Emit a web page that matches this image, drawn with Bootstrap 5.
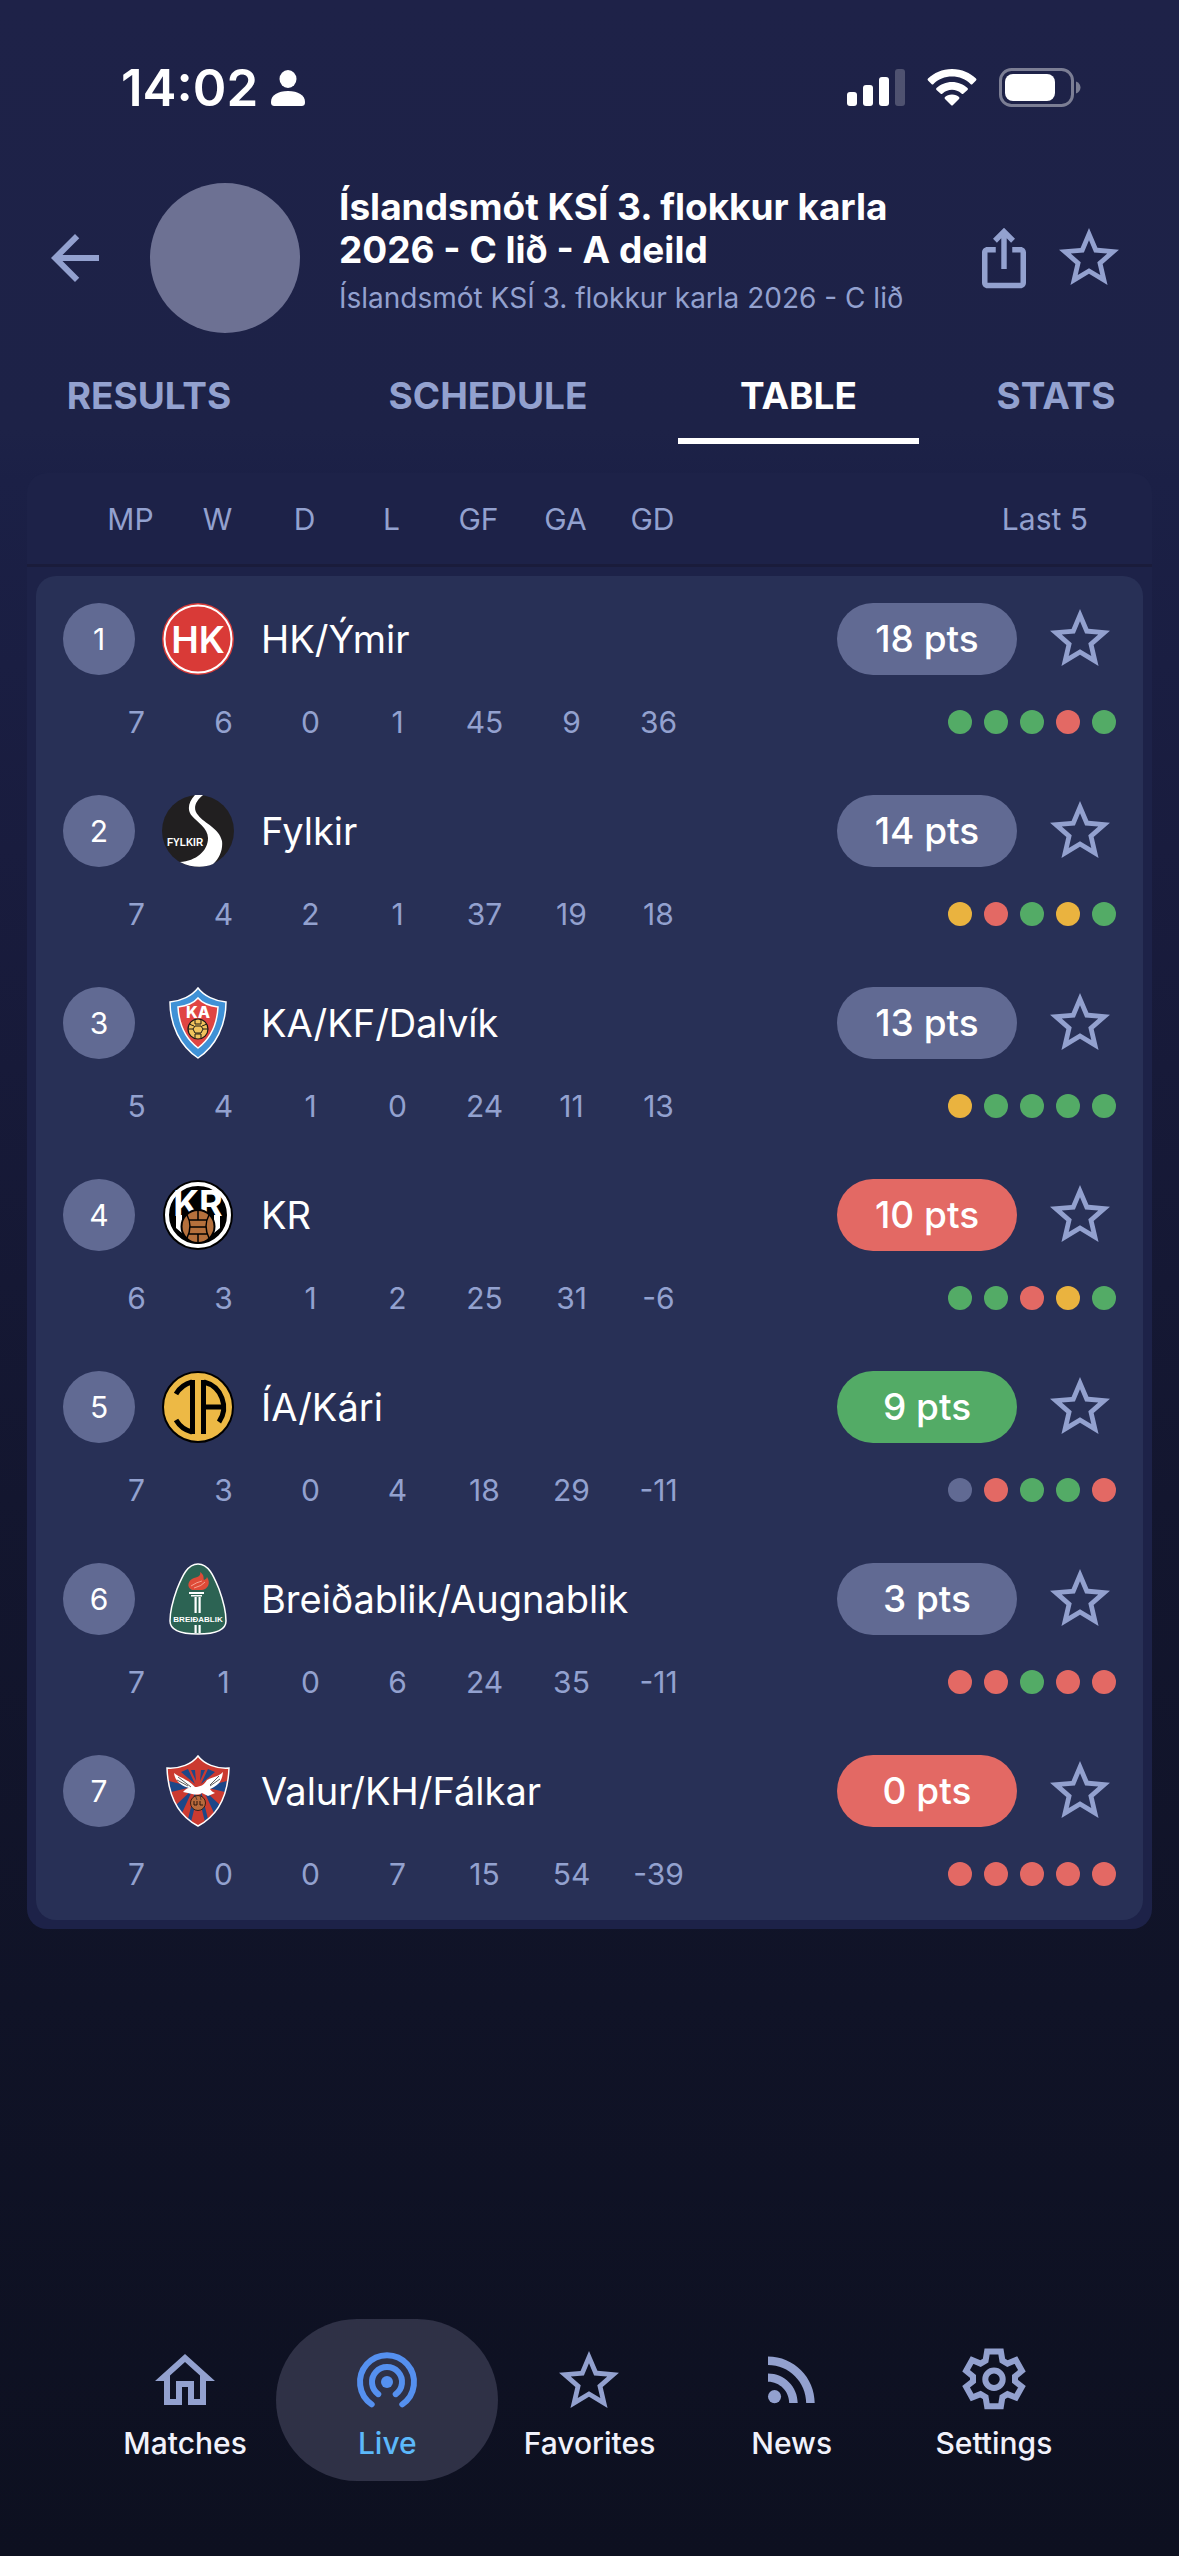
<!DOCTYPE html>
<html lang="is">
<head>
<meta charset="utf-8">
<meta name="viewport" content="width=device-width, initial-scale=1">
<title>Íslandsmót KSÍ 3. flokkur karla 2026 - C lið - A deild</title>
<link rel="stylesheet" href="https://cdn.jsdelivr.net/npm/bootstrap@5.3.0/dist/css/bootstrap.min.css">
<script src="https://cdn.jsdelivr.net/npm/bootstrap@5.3.0/dist/js/bootstrap.bundle.min.js" defer></script>
<style>
  :root { --ink: #93a1cf; --panel: #1d2248; --rows: #283056; --chip: #616a93; --win: #53ab66; --loss: #e36964; --draw: #eab33f; }
  body { font-family: Inter, "Open Sans", sans-serif; color: #fff;
    background: #0e1122 linear-gradient(180deg, #1e2248 0, #1d2247 430px, #1b2046 480px, #191c3e 850px, #13162f 1500px, #101327 2000px, #0d1020 2556px) no-repeat; }
  svg { display: block; flex: none; }
  .glyph { width: 72px; height: 72px; fill: currentColor; }
  .bare { border: 0; background: none; padding: 0; color: var(--ink); }
  .status-bar { padding: 66px 98px 0 121px; height: 183px; }
  .clock { font-size: 51px; line-height: 44px; font-weight: 600; }
  .person { margin-left: 13px; }
  .signals { gap: 22px; }
  .league-head { padding: 0 54px 0 39px; }
  .avatar-disc { width: 150px; height: 150px; background: #6d7193; margin: 0 39px; flex: none; }
  .league-text { padding-bottom: 16px; }
  .league-title { font-size: 37px; line-height: 43px; font-weight: 700; }
  .league-sub { font-size: 28px; line-height: 34px; margin-top: 10px; color: var(--ink); }
  .head-actions { gap: 16px; }
  .tab-strip { display: grid; grid-template-columns: 298fr 340fr 241fr 234fr; column-gap: 20px; padding: 42px 6px 29px 0; }
  .tab-strip a { font-size: 37px; line-height: 42px; font-weight: 700; padding-bottom: 21px; border-bottom: 6px solid transparent; color: var(--ink); text-align: center; text-decoration: none; }
  .tab-strip a.active { color: #fff; border-color: #fff; }
  .standings { margin: 0 27px; padding-bottom: 9px; background: var(--panel); border-radius: 20px; font-size: 30px; line-height: 36px; color: var(--ink); }
  .standings table, .standings thead, .standings tbody { display: block; }
  .standings th, .standings td { padding: 0; font-weight: 400; }
  .standings thead tr { display: flex; padding: 28px 64px 27px 60px; border-bottom: 3px solid #1a1c3b; }
  .stat { width: 87px; text-align: center; }
  .standings tbody { margin: 9px 9px 0; background: var(--rows); border-radius: 20px; }
  .standings tbody tr { display: flex; flex-wrap: wrap; row-gap: 29px; padding: 27px 27px 28px; }
  .team-cell { width: 100%; display: flex; align-items: center; color: #fff; }
  .team-cell + .stat { margin-left: 30px; }
  .place { width: 72px; height: 72px; border-radius: 50%; background: var(--chip); line-height: 72px; text-align: center; }
  .crest { width: 72px; height: 72px; margin: 0 27px; }
  .team-name { font-size: 38px; line-height: 44px; color: #fff; text-decoration: none; }
  .points { width: 180px; border-radius: 36px; background: var(--chip); font-size: 37px; line-height: 72px; text-align: center; margin: 0 27px 0 auto; font-weight: 500; }
  .points.up { background: var(--win); }
  .points.down { background: var(--loss); }
  .form-cell { display: flex; align-items: center; gap: 12px; margin-left: auto; }
  .form-cell i { width: 24px; height: 24px; border-radius: 50%; background: var(--chip); }
  .form-cell .w { background: var(--win); }
  .form-cell .l { background: var(--loss); }
  .form-cell .d { background: var(--draw); }
  .app-nav { display: grid; grid-template-columns: repeat(5, 1fr); padding: 0 84px 75px; }
  .app-nav a { display: flex; flex-direction: column; align-items: center; gap: 8px; padding: 26px 0 20px; margin: 0 -10px; border-radius: 81px; color: #f1f2fb; font-size: 30px; line-height: 36px; font-weight: 500; text-decoration: none; }
  .app-nav svg { color: var(--ink); }
  .app-nav a.active { background: #2f3146; color: #5cb8fa; }
  .app-nav a.active svg { color: #5590ef; }
</style>
</head>
<body>
<svg width="0" height="0" class="position-absolute" aria-hidden="true">
  <symbol id="star" viewBox="0 0 24 24"><path d="M22 9.24l-7.19-.62L12 2 9.19 8.63 2 9.24l5.46 4.73L5.82 21 12 17.27 18.18 21l-1.63-7.03L22 9.24zM12 15.4l-3.76 2.27 1-4.28-3.32-2.88 4.38-.38L12 6.1l1.71 4.04 4.38.38-3.32 2.88 1 4.28L12 15.4z"/></symbol>
</svg>
<div class="d-flex flex-column min-vh-100">

  <div class="status-bar d-flex align-items-start justify-content-between">
    <div class="d-flex align-items-center">
      <span class="clock">14:02</span>
      <svg class="person" width="34" height="44" viewBox="0 0 34 44" fill="#fff"><ellipse cx="17" cy="13" rx="8.5" ry="9"/><path d="M0 36C0 29 7 25 17 25s17 4 17 11c0 3-1 4-4 4H4c-3 0-4-1-4-4z"/></svg>
    </div>
    <div class="signals d-flex align-items-center">
      <svg width="58" height="44" viewBox="0 0 58 44" fill="#fff"><rect y="26" width="10" height="14" rx="3"/><rect x="16" y="19" width="10" height="21" rx="3"/><rect x="32" y="11" width="10" height="29" rx="3"/><rect x="48" y="3" width="10" height="37" rx="3" opacity=".22"/></svg>
      <svg width="50" height="44" viewBox="0 0 50 44" fill="#fff"><path d="M25 3C15 3 7 7 1 12.500q-1 1 0 2L4.500 18q1 1 2 0C11 13 18 10.500 25 10.500S39 13 43.500 18q1 1 2 0L49 14.500q1-1 0-2C43 7 35 3 25 3z"/><path d="M25 16c-6 0-11.500 2.500-15.500 6q-1 1 0 2l4 3.500q1 1 2 0c3-2.500 6-3.700 9.500-3.700s6.500 1.200 9.500 3.700q1 1 2 0l4-3.500q1-1 0-2C36.500 18.500 31 16 25 16z"/><path d="M25 28.500c-3 0-5.500 1-7 2.500q-1 1 0 2l6 6q1 1 2 0l6-6q1-1 0-2c-1.500-1.500-4-2.500-7-2.500z"/></svg>
      <svg width="82" height="44" viewBox="0 0 82 44"><rect x="1.500" y="3.500" width="72" height="36" rx="11" fill="none" stroke="#fff" stroke-opacity=".42" stroke-width="3"/><rect x="6" y="8" width="50" height="27" rx="8" fill="#fff"/><path d="M77 15.500c3 1 4.500 3.500 4.500 6s-1.500 5-4.500 6z" fill="#fff" opacity=".42"/></svg>
    </div>
  </div>

  <header class="league-head d-flex align-items-center">
    <button type="button" class="bare" aria-label="Back"><svg class="glyph" viewBox="0 0 24 24"><path d="M20 11H7.830l5.590-5.590L12 4l-8 8 8 8 1.410-1.410L7.830 13H20v-2z"/></svg></button>
    <div class="avatar-disc rounded-circle"></div>
    <div class="league-text flex-grow-1">
      <h1 class="league-title mb-0">Íslandsmót KSÍ 3. flokkur karla 2026 - C lið - A deild</h1>
      <div class="league-sub text-nowrap">Íslandsmót KSÍ 3. flokkur karla 2026 - C lið</div>
    </div>
    <div class="head-actions d-flex align-items-center">
      <button type="button" class="bare" aria-label="Share"><svg width="66" height="66" viewBox="0 0 24 24" fill="currentColor"><path d="m16 5-1.420 1.420-1.590-1.590V16h-1.980V4.830L9.420 6.420 8 5l4-4 4 4zm4 5v11c0 1.100-.9 2-2 2H6c-1.110 0-2-.9-2-2V10c0-1.110.89-2 2-2h3v2H6v11h12V10h-3V8h3c1.100 0 2 .89 2 2z"/></svg></button>
      <button type="button" class="bare" aria-label="Follow"><svg class="glyph"><use href="#star"/></svg></button>
    </div>
  </header>

  <nav class="tab-strip">
    <a href="#results">RESULTS</a>
    <a href="#schedule">SCHEDULE</a>
    <a href="#table" class="active" aria-current="page">TABLE</a>
    <a href="#stats">STATS</a>
  </nav>

  <main class="standings" id="table">
    <table>
      <thead>
        <tr><th class="stat">MP</th><th class="stat">W</th><th class="stat">D</th><th class="stat">L</th><th class="stat">GF</th><th class="stat">GA</th><th class="stat">GD</th><th class="ms-auto">Last 5</th></tr>
      </thead>
      <tbody>
        <tr>
          <td class="team-cell"><span class="place">1</span>
            <svg class="crest" viewBox="0 0 72 72"><circle cx="36" cy="36" r="36" fill="#d93a37"/><circle cx="36" cy="36" r="33.500" fill="none" stroke="#fff" stroke-width="2"/><text x="36" y="50" text-anchor="middle" fill="#fff" font-family="Inter, sans-serif" font-size="37" font-weight="600">HK</text></svg>
            <a class="team-name" href="#hk">HK/Ýmir</a><span class="points">18 pts</span>
            <button type="button" class="bare" aria-label="Follow HK/Ýmir"><svg class="glyph"><use href="#star"/></svg></button></td>
          <td class="stat">7</td><td class="stat">6</td><td class="stat">0</td><td class="stat">1</td><td class="stat">45</td><td class="stat">9</td><td class="stat">36</td>
          <td class="form-cell"><i class="w"></i><i class="w"></i><i class="w"></i><i class="l"></i><i class="w"></i></td>
        </tr>
        <tr>
          <td class="team-cell"><span class="place">2</span>
            <svg class="crest" viewBox="0 0 72 72"><circle cx="36" cy="36" r="36" fill="#211f20"/><path d="M33 0C26 7 25 16 30 21C35 27 46 33 46 43C46 56 34 66 18 67C30 73 42 73 51 69C58 63 61 54 60 46C57 33 43 29 36 20C30 13 34 6 41 0z" fill="#fff"/><text x="5" y="51" fill="#fff" font-family="Liberation Sans, sans-serif" font-size="10" font-weight="700">FYLKIR</text></svg>
            <a class="team-name" href="#fylkir">Fylkir</a><span class="points">14 pts</span>
            <button type="button" class="bare" aria-label="Follow Fylkir"><svg class="glyph"><use href="#star"/></svg></button></td>
          <td class="stat">7</td><td class="stat">4</td><td class="stat">2</td><td class="stat">1</td><td class="stat">37</td><td class="stat">19</td><td class="stat">18</td>
          <td class="form-cell"><i class="d"></i><i class="l"></i><i class="w"></i><i class="d"></i><i class="w"></i></td>
        </tr>
        <tr>
          <td class="team-cell"><span class="place">3</span>
            <svg class="crest" viewBox="0 0 72 72"><path d="M36 1C42 9 53 14 64 15C64 38 54 59 36 71C18 59 8 38 8 15C19 14 30 9 36 1z" fill="#3f91d6" stroke="#fff" stroke-width="1.500"/><path d="M36 11C41 17 48 19 56 20C55 38 48 52 36 61C24 52 17 38 16 20C24 19 31 17 36 11z" fill="#e04543" stroke="#fff" stroke-width="1.500"/><text x="36" y="31" text-anchor="middle" fill="#fff" font-family="Inter, sans-serif" font-size="16" font-weight="800">KA</text><circle cx="36" cy="42" r="10" fill="#f0c35c" stroke="#1c1a16" stroke-width="1.200"/><path d="M26 42h5l2-3h6l2 3h5M31 42l2 4h6l2-4M33 33v4h6v-4M33 51v-4h6v4M27 37l5 2M45 37l-5 2" fill="none" stroke="#1c1a16" stroke-width="1"/></svg>
            <a class="team-name" href="#ka">KA/KF/Dalvík</a><span class="points">13 pts</span>
            <button type="button" class="bare" aria-label="Follow KA/KF/Dalvík"><svg class="glyph"><use href="#star"/></svg></button></td>
          <td class="stat">5</td><td class="stat">4</td><td class="stat">1</td><td class="stat">0</td><td class="stat">24</td><td class="stat">11</td><td class="stat">13</td>
          <td class="form-cell"><i class="d"></i><i class="w"></i><i class="w"></i><i class="w"></i><i class="w"></i></td>
        </tr>
        <tr>
          <td class="team-cell"><span class="place">4</span>
            <svg class="crest" viewBox="0 0 72 72"><circle cx="36" cy="36" r="35" fill="#000"/><circle cx="36" cy="36" r="31" fill="none" stroke="#fff" stroke-width="4"/><text x="36" y="37" text-anchor="middle" fill="#fff" font-family="Inter, sans-serif" font-size="36" font-weight="700">KR</text><path d="M14 36h6v18l-6-5zM52 36h6v13l-6 5z" fill="#fff"/><circle cx="36" cy="47.500" r="16.500" fill="#b5703c" stroke="#000" stroke-width="2"/><path d="M25 36Q31 47 25 59M47 36Q41 47 47 59M27 41h18M28 48h16M27 55h18M36 31v10M36 55v9" fill="none" stroke="#000" stroke-width="1.500"/></svg>
            <a class="team-name" href="#kr">KR</a><span class="points down">10 pts</span>
            <button type="button" class="bare" aria-label="Follow KR"><svg class="glyph"><use href="#star"/></svg></button></td>
          <td class="stat">6</td><td class="stat">3</td><td class="stat">1</td><td class="stat">2</td><td class="stat">25</td><td class="stat">31</td><td class="stat">-6</td>
          <td class="form-cell"><i class="w"></i><i class="w"></i><i class="l"></i><i class="d"></i><i class="w"></i></td>
        </tr>
        <tr>
          <td class="team-cell"><span class="place">5</span>
            <svg class="crest" viewBox="0 0 72 72"><circle cx="36" cy="36" r="35" fill="#edb945" stroke="#000" stroke-width="2"/><g fill="none" stroke="#000" stroke-width="5"><path d="M30.500 9v54M41.500 9v54M44 36h18"/><path d="M14 23A26 26 0 0 1 30 11M14 49A26 26 0 0 0 30 61M42 11A26 26 0 0 1 57 51"/></g></svg>
            <a class="team-name" href="#ia">ÍA/Kári</a><span class="points up">9 pts</span>
            <button type="button" class="bare" aria-label="Follow ÍA/Kári"><svg class="glyph"><use href="#star"/></svg></button></td>
          <td class="stat">7</td><td class="stat">3</td><td class="stat">0</td><td class="stat">4</td><td class="stat">18</td><td class="stat">29</td><td class="stat">-11</td>
          <td class="form-cell"><i></i><i class="l"></i><i class="w"></i><i class="w"></i><i class="l"></i></td>
        </tr>
        <tr>
          <td class="team-cell"><span class="place">6</span>
            <svg class="crest" viewBox="0 0 72 72"><path d="M36 1C47 1 52 14 57 26C61 37 64 47 64 58C64 68 52 71 36 71S8 68 8 58C8 47 11 37 15 26C20 14 25 1 36 1z" fill="#2c6353" stroke="#fff" stroke-width="1.500"/><path d="M27 29h15v2H27zM29 32h11v1.500H29zM32.500 34h2.200v16h-2.200zM36.500 34h2.200v16h-2.200zM32.500 62h2.200v8h-2.200zM36.500 62h2.200v8h-2.200z" fill="#fff"/><path d="M30 27C24 24 26 17 32 15C37 14 39 12 38 9C43 12 41 16 42 17Q45 16 45 14C49 20 46 26 40 27z" fill="#df4a37"/><path d="M29 23q6-4 11-5M32 25q8-2 11-6" fill="none" stroke="#f7b9a8" stroke-width=".8"/><text x="36" y="59" text-anchor="middle" fill="#fff" font-family="Liberation Sans, sans-serif" font-size="8" font-weight="700">BREIÐABLIK</text></svg>
            <a class="team-name" href="#breidablik">Breiðablik/Augnablik</a><span class="points">3 pts</span>
            <button type="button" class="bare" aria-label="Follow Breiðablik/Augnablik"><svg class="glyph"><use href="#star"/></svg></button></td>
          <td class="stat">7</td><td class="stat">1</td><td class="stat">0</td><td class="stat">6</td><td class="stat">24</td><td class="stat">35</td><td class="stat">-11</td>
          <td class="form-cell"><i class="l"></i><i class="l"></i><i class="w"></i><i class="l"></i><i class="l"></i></td>
        </tr>
        <tr>
          <td class="team-cell"><span class="place">7</span>
            <svg class="crest" viewBox="0 0 72 72"><path d="M36 1C42 9 54 14 67 13C66 40 57 60 36 71C15 60 6 40 5 13C18 14 30 9 36 1z" fill="#cb3a30"/><path d="M33 15l-4 0L34 26zM39 15l4 0L38 26zM26 14l-7 3 14 12zM46 14l7 3-14 12zM30 32L7 26 9 37zM42 32l23-6-2 11zM31 34L14 50l6 8zM41 34l17 16-6 8zM33 36L26 64l3 3 5-20zM39 36l7 28-3 3-5-20z" fill="#1d4788"/><path d="M36 1C42 9 54 14 67 13C66 40 57 60 36 71C15 60 6 40 5 13C18 14 30 9 36 1z" fill="none" stroke="#fff" stroke-width="1.500"/><circle cx="36" cy="48" r="7.500" fill="#b86a3c" stroke="#3a1e12"/><path d="M32 46v4h3v-4M38 46v4h3" fill="none" stroke="#2a140c"/><path d="M12 18C18 23 26 24 33 32C38 32 42 30 45 25C50 22 56 22 61 17C60 26 57 30 48 34C49 36 51 37 53 38L46 41L40 38C36 41 30 39 26 38L21 37C24 34 25 33 27 33C19 31 13 26 12 18z" fill="#fff"/><path d="M16 22l13 10M15 25l11 6M57 21l-9 9M58 24l-10 7M33 40l2 5M38 40l1 5" stroke="#333" stroke-width=".8"/></svg>
            <a class="team-name" href="#valur">Valur/KH/Fálkar</a><span class="points down">0 pts</span>
            <button type="button" class="bare" aria-label="Follow Valur/KH/Fálkar"><svg class="glyph"><use href="#star"/></svg></button></td>
          <td class="stat">7</td><td class="stat">0</td><td class="stat">0</td><td class="stat">7</td><td class="stat">15</td><td class="stat">54</td><td class="stat">-39</td>
          <td class="form-cell"><i class="l"></i><i class="l"></i><i class="l"></i><i class="l"></i><i class="l"></i></td>
        </tr>
      </tbody>
    </table>
  </main>

  <nav class="app-nav mt-auto">
    <a href="#matches"><svg class="glyph" viewBox="0 0 24 24"><path d="M12 5.690l5 4.500V18h-2v-6H9v6H7v-7.810l5-4.500M12 3L2 12h3v8h6v-6h2v6h6v-8h3L12 3z"/></svg>Matches</a>
    <a href="#live" class="active" aria-current="page"><svg class="glyph" viewBox="0 0 24 24"><circle cx="12" cy="12.300" r="2"/><path d="M9.100 16.400A5 5 0 1 1 14.900 16.400M6.900 19.800A9 9 0 1 1 17.100 19.800" fill="none" stroke="currentColor" stroke-width="2" stroke-linecap="round"/></svg>Live</a>
    <a href="#favorites"><svg class="glyph"><use href="#star"/></svg>Favorites</a>
    <a href="#news"><svg class="glyph" viewBox="0 0 24 24"><circle cx="6.180" cy="17.200" r="2.180"/><path d="M4 3.800v2.830c7.030 0 12.730 5.700 12.730 12.730h2.830C19.560 10.770 12.590 3.800 4 3.800zm0 5.660v2.830c3.900 0 7.070 3.170 7.070 7.070h2.830c0-5.470-4.430-9.900-9.900-9.900z"/></svg>News</a>
    <a href="#settings"><svg class="glyph" viewBox="0 0 24 24"><g fill="none" stroke="currentColor" stroke-width="2"><path d="M9.700 20.400l-.5-3-1.700-1-2.800 1.100-2-3.600 2.300-1.800v-1.600L2.700 8.600l2-3.600 2.800 1.200 1.700-1 .5-3h4.600l.5 3 1.700 1L19.300 5l2 3.600L19 10.500v1.600l2.300 1.800-2 3.600-2.800-1.100-1.700 1-.5 3z"/><circle cx="12" cy="11.400" r="2.900"/></g></svg>Settings</a>
  </nav>
</div>
</body>
</html>
